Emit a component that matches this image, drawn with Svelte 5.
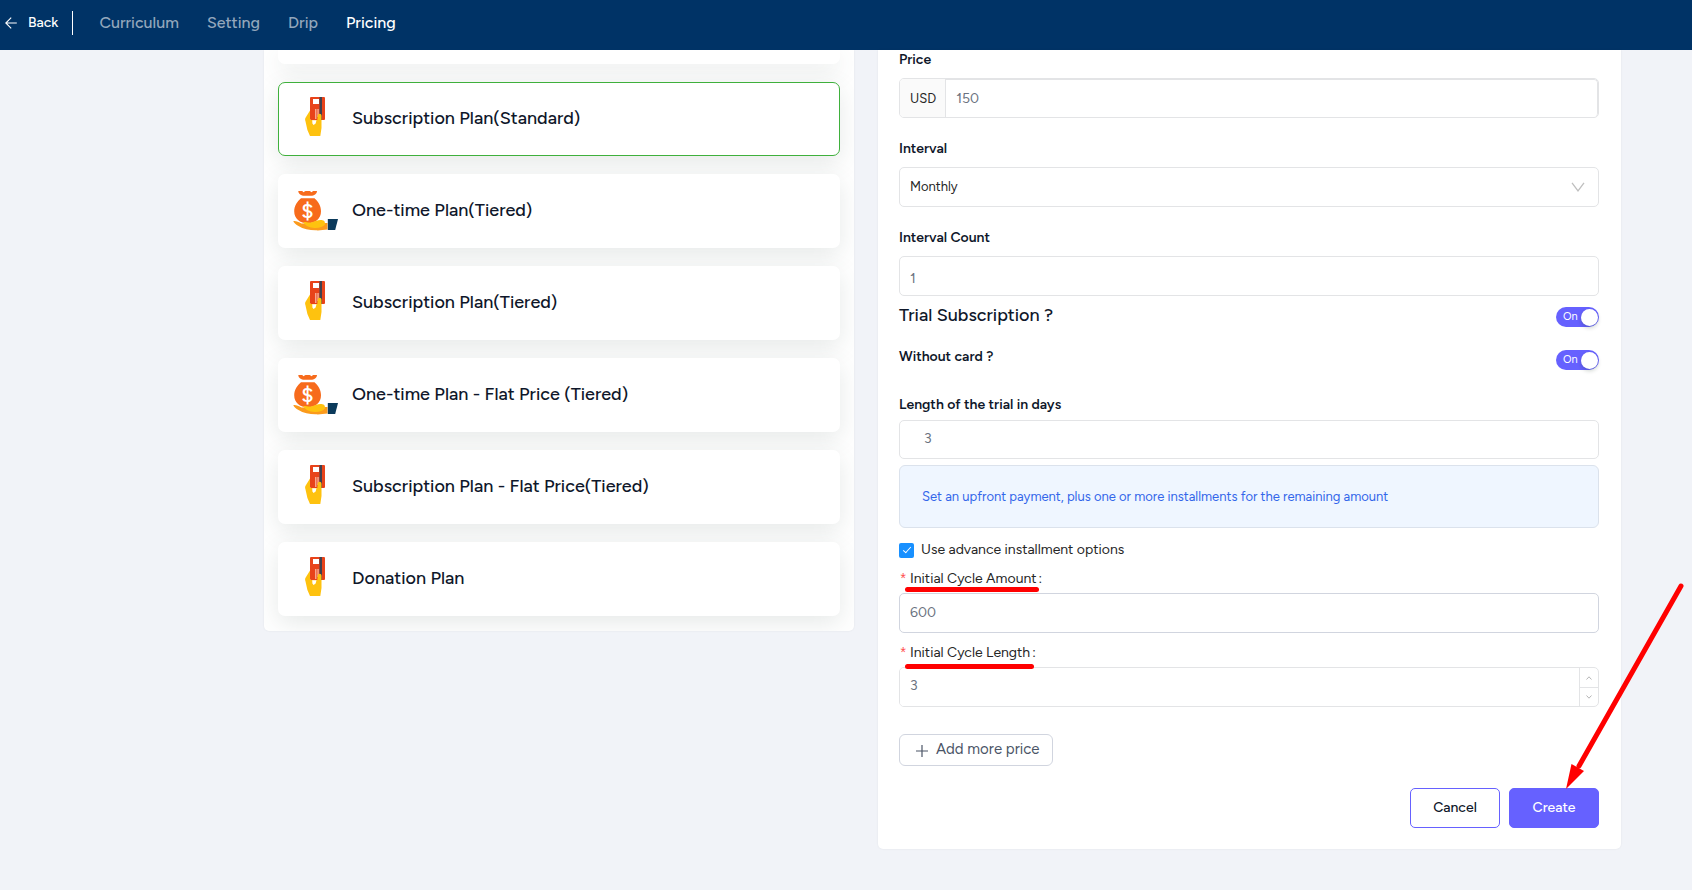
<script>
  const tabs = ['Curriculum', 'Setting', 'Drip', 'Pricing'];
  const activeTab = 'Pricing';

  const plans = [
    { name: 'Subscription Plan(Standard)', icon: 'card' },
    { name: 'One-time Plan(Tiered)', icon: 'bag' },
    { name: 'Subscription Plan(Tiered)', icon: 'card' },
    { name: 'One-time Plan - Flat Price (Tiered)', icon: 'bag' },
    { name: 'Subscription Plan - Flat Price(Tiered)', icon: 'card' },
    { name: 'Donation Plan', icon: 'card' }
  ];

  let selected = $state(0);
  let price = $state('150');
  let interval = $state('Monthly');
  let intervalCount = $state('1');
  let trial = $state(true);
  let withoutCard = $state(true);
  let trialDays = $state('3');
  let advanced = $state(true);
  let cycleAmount = $state('600');
  let cycleLength = $state(3);
</script>

<header class="topbar">
  <a class="back" href="#back">
    <svg width="12" height="12" viewBox="0 0 12 12" fill="none" stroke="currentColor" stroke-width="1.1">
      <path d="M11.8 6H.8M6.2.6.8 6l5.4 5.4" />
    </svg>
    Back
  </a>
  <nav>
    {#each tabs as tab}
      <a href={'#' + tab.toLowerCase()} class:active={tab === activeTab}>{tab}</a>
    {/each}
  </nav>
</header>

<main>
  <section class="panel plans">
    <div class="plan cut"></div>
    {#each plans as plan, i}
      <button type="button" class="plan" class:selected={selected === i} aria-pressed={selected === i} onclick={() => (selected = i)}>
        {#if plan.icon === 'card'}
          <svg width="46" height="44" viewBox="0 0 46 44" aria-hidden="true">
            <rect x="17" y="0" width="15" height="23" rx="1" fill="#e8431a" />
            <rect x="20" y="2" width="6" height="5" fill="#fff" />
            <rect x="26.500" y="0" width="2.500" height="23" fill="#40424f" />
            <path d="M22 12h1.5v10H22zM24.3 12h1.5v8h-1.5z" fill="#f6a78e" />
            <path d="M17 13.5 12.4 21c-.4 1-.4 1.800 0 3l2 9L17 39h10.300l1.200-8V19c0-1.300-.8-2.200-1.800-2.200-1.200 0-1.900.9-2.100 2.200l-.3 4H18.500c-1 0-1.500-.5-1.500-1.500z" fill="#fec20f" />
            <path d="M19.200 23.200h4.300l-.9 3.400-2 1.400-1.200-1.500z" fill="#fff" />
          </svg>
        {:else}
          <svg width="46" height="44" viewBox="0 0 46 44" aria-hidden="true">
            <path d="M5.300 2h4l1 1.200L12.500 2h4.200l2 1.200L20 2h4c0 2.700-3 4.800-6 4.800h-6.500C8.300 6.800 5.300 4.700 5.300 2z" fill="#f76b1c" />
            <path d="M8 9.300h13.500c3.500 3 6.500 7.500 6.500 13 0 7.500-5.500 12-13.300 12S1.200 29.800 1.200 22.300c0-5.500 3.300-10 6.800-13z" fill="#f76b1c" />
            <path d="M.3 32.200c2.500-.4 5.200.8 8.200 2.300L34.500 34v6.500c-4 .2-8 1.300-12 .8-6-.2-12.500-1.300-17-4.300C3 35.500 1 34 .3 32.200z" fill="#fb9a1c" />
            <path d="M10 33c3-.4 5.500 1.200 9 .3 3.500-1.300 6-2.600 9.500-2.300 3 .2 3.500 1.600 3.500 4.500-2 2.400-6 3.700-10.500 3.400-5-.2-8.500-1.500-11.500-5.900z" fill="#fec20f" />
            <path d="M34.800 30H45l-2.800 11h-7.400z" fill="#0b3a5b" />
            <text x="14.500" y="30" text-anchor="middle" font-size="22" fill="#fff">$</text>
          </svg>
        {/if}
        <span>{plan.name}</span>
      </button>
    {/each}
  </section>

  <form class="panel form" onsubmit={(e) => e.preventDefault()}>
    <div class="field">
      <label class="title" for="price">Price</label>
      <div class="addon box">
        <span>USD</span>
        <input id="price" type="text" bind:value={price} />
      </div>
    </div>

    <div class="field">
      <label class="title" for="interval">Interval</label>
      <div class="select">
        <select id="interval" class="box" bind:value={interval}>
          <option>Monthly</option>
          <option>Yearly</option>
        </select>
        <svg width="14" height="10" viewBox="0 0 14 10" fill="none" stroke="#bfbfbf" stroke-width="1.300" aria-hidden="true">
          <path d="M1 .8 7 8.800 13 .8" />
        </svg>
      </div>
    </div>

    <div class="field last">
      <label class="title" for="count">Interval Count</label>
      <input id="count" class="box low" type="text" bind:value={intervalCount} />
    </div>

    <div class="toggle">
      <label class="big" for="trial">Trial Subscription ?</label>
      <span class="switch"><input id="trial" type="checkbox" role="switch" bind:checked={trial} /><span>On</span></span>
    </div>
    <div class="toggle second">
      <label class="title" for="nocard">Without card ?</label>
      <span class="switch"><input id="nocard" type="checkbox" role="switch" bind:checked={withoutCard} /><span>On</span></span>
    </div>

    <label class="title" for="days">Length of the trial in days</label>
    <input id="days" class="box indent" type="text" bind:value={trialDays} />

    <p class="note">Set an upfront payment, plus one or more installments for the remaining amount</p>

    <label class="check">
      <input type="checkbox" bind:checked={advanced} />
      Use advance installment options
    </label>

    <div class="item">
      <label class="required" for="amount"><i>*</i><span>Initial Cycle Amount<b>:</b></span></label>
      <input id="amount" class="box strong" type="text" bind:value={cycleAmount} />
    </div>

    <div class="item">
      <label class="required long" for="length"><i>*</i><span>Initial Cycle Length<b>:</b></span></label>
      <div class="stepper box">
        <input id="length" type="number" bind:value={cycleLength} />
        <div class="steps">
          <button type="button" aria-label="Increase" onclick={() => cycleLength++}>
            <svg width="6" height="4" viewBox="0 0 6 4" fill="none" stroke="#b5b5b5"><path d="M.5 3.500 3 .8l2.500 2.700" /></svg>
          </button>
          <button type="button" aria-label="Decrease" onclick={() => cycleLength--}>
            <svg width="6" height="4" viewBox="0 0 6 4" fill="none" stroke="#b5b5b5"><path d="M.5.5 3 3.200 5.500.5" /></svg>
          </button>
        </div>
      </div>
    </div>

    <button type="button" class="add">
      <svg width="12" height="12" viewBox="0 0 12 12" stroke="currentColor" stroke-width="1.200" aria-hidden="true"><path d="M6 0v12M0 6h12" /></svg>
      <span>Add more price</span>
    </button>

    <div class="actions">
      <button type="button" class="cancel">Cancel</button>
      <div class="target">
        <button type="submit" class="create">Create</button>
        <svg class="arrow" width="120" height="208" viewBox="0 0 120 208" aria-hidden="true">
          <path d="M115 5 13 185" stroke="#f00" stroke-width="5" stroke-linecap="round" />
          <path d="M0 208 5.500 183l12.500 7z" fill="#f00" />
        </svg>
      </div>
    </div>
  </form>
</main>

<style>
  :global(body) {
    margin: 0;
    background: #f1f3f8;
    font-family: Figtree, Lato, 'Open Sans', sans-serif;
    font-size: 14px;
    line-height: 20px;
    color: #0f172a;
  }

  input, select, button {
    font: inherit;
    color: inherit;
    margin: 0;
    box-sizing: border-box;
  }

  button { cursor: pointer; }

  a {
    color: inherit;
    text-decoration: none;
  }

  .topbar {
    display: flex;
    align-items: center;
    height: 50px;
    padding-left: 5px;
    box-sizing: border-box;
    background: #003366;
    color: #fff;
    font-weight: 500;
    padding-bottom: 4px;
  }

  .back {
    display: flex;
    align-items: center;
    gap: 11px;
    height: 24px;
    padding-right: 14px;
    border-right: 1px solid #fff;
  }

  nav {
    display: flex;
    gap: 28px;
    padding-left: 26px;
    font-size: 16px;
    color: #93a7bc;
  }

  nav .active { color: #fff; }

  main {
    display: grid;
    grid-template-columns: 590fr 743fr;
    align-items: start;
    gap: 24px;
    padding: 0 71px 41px 264px;
  }

  .panel {
    background: #fff;
    border-radius: 0 0 5px 5px;
    box-shadow: 0 0 2px rgba(15, 23, 42, 0.08);
    clip-path: inset(0 -4px -4px);
    box-sizing: border-box;
  }

  .plans {
    display: flex;
    flex-direction: column;
    gap: 18px;
    padding: 0 14px 15px;
    overflow: hidden;
  }

  .plan {
    display: flex;
    align-items: center;
    gap: 13px;
    height: 74px;
    padding: 0 14px;
    border: 1px solid transparent;
    border-radius: 7px;
    background: #fff;
    background-clip: border-box;
    box-shadow: 0 7px 24px rgba(60, 85, 80, 0.13);
    font-size: 18px;
    font-weight: 500;
    text-align: left;
  }

  .plan span { padding-bottom: 2px; }

  .plan.cut {
    height: 14px;
    box-sizing: border-box;
    border-radius: 0 0 7px 7px;
  }

  .plan.selected { border-color: #3fb03c; }

  .form {
    display: flex;
    flex-direction: column;
    padding: 0 22px 21px 21px;
    clip-path: none;
  }

  .field {
    display: flex;
    flex-direction: column;
    gap: 8px;
    padding-bottom: 21px;
  }

  .field.last { padding-bottom: 7px; }

  .title {
    font-size: 14px;
    font-weight: 600;
  }

  .big {
    font-size: 18px;
    font-weight: 500;
  }

  .box {
    width: 100%;
    height: 40px;
    padding: 0 10px;
    border: 1px solid #e3e4e6;
    border-radius: 5px;
    background: #fff;
    box-sizing: border-box;
    font-size: 14px;
    color: #6b7280;
    outline: none;
  }

  .box.low { padding-top: 5px; }

  .box.strong {
    padding-bottom: 2px;
    border-color: #d1d5df;
  }

  .box.indent {
    height: 39px;
    padding: 0 24px 3px;
    margin-top: 5px;
  }

  .addon {
    display: flex;
    padding: 0;
    overflow: hidden;
  }

  .addon span {
    display: flex;
    align-items: center;
    padding: 2px 9px 0 10px;
    background: #fafafa;
    border-right: 1px solid #e3e4e6;
    font-size: 13px;
    color: #262626;
  }

  .addon input {
    flex: 1;
    min-width: 0;
    padding: 0 10px;
    border: 0;
    border-top: 1px solid #e3e4e6;
    border-right: 1px solid #e3e4e6;
    border-radius: 0 4px 4px 0;
    outline: none;
  }

  .select { display: grid; }

  .select > * { grid-area: 1 / 1; }

  select {
    appearance: none;
  }

  .select select {
    font-size: 13px;
    color: #262626;
  }

  .select svg {
    justify-self: end;
    align-self: center;
    margin-right: 14px;
    pointer-events: none;
  }

  .toggle {
    display: flex;
    justify-content: space-between;
    align-items: flex-start;
    padding-top: 4px;
    height: 39px;
  }

  .toggle .big { margin-top: -2px; }

  .toggle.second {
    height: 48px;
    padding-top: 1px;
  }

  .toggle .switch { margin-top: 3px; }
  .toggle:not(.second) .switch { margin-top: 0; }

  .switch {
    display: grid;
    width: 43px;
    height: 20px;
  }

  .switch > * { grid-area: 1 / 1; }

  .switch input {
    appearance: none;
    display: flex;
    justify-content: flex-end;
    align-items: center;
    width: 43px;
    height: 20px;
    padding: 0 1px;
    border-radius: 10px;
    background: #6661ff;
  }

  .switch input::after {
    content: '';
    width: 17px;
    height: 17px;
    border-radius: 50%;
    background: #fff;
    box-shadow: 0 2px 4px rgba(0, 35, 11, 0.2);
  }

  .switch span {
    padding-left: 7px;
    font-size: 11px;
    line-height: 19px;
    color: #fff;
    pointer-events: none;
  }

  .note {
    margin: 6px 0 0;
    padding: 21px 22px 20px;
    border: 1px solid #dbe2ec;
    border-radius: 6px;
    background: #eff6ff;
    font-size: 13px;
    color: #3366ea;
  }

  .check {
    display: flex;
    align-items: center;
    gap: 7px;
    margin-top: 12px;
    color: #262626;
  }

  .check input {
    appearance: none;
    display: grid;
    place-items: center;
    width: 15px;
    height: 15px;
    border-radius: 2px;
    background: #1890ff;
  }

  .check input::after {
    content: '';
    width: 3px;
    height: 7px;
    border: solid #fff;
    border-width: 0 1px 1px 0;
    transform: translateY(-1px) rotate(42deg);
  }

  .item {
    display: flex;
    flex-direction: column;
    gap: 4px;
    padding-top: 10px;
  }

  .check + .item { padding-top: 9px; }

  .required {
    display: flex;
    position: relative;
    gap: 5px;
    height: 20px;
    color: #262626;
  }

  .required i {
    width: 6px;
    font-family: 'Liberation Mono', monospace;
    font-size: 14px;
    line-height: 22px;
    color: #ff4d4f;
    font-style: normal;
  }

  .required b {
    margin-left: 2px;
    font-weight: 400;
  }

  .required::after {
    content: '';
    position: absolute;
    left: 6px;
    top: 18px;
    z-index: 1;
    width: 134px;
    height: 5px;
    border-radius: 3px;
    background: #f00;
  }

  .required.long::after {
    top: 21px;
    width: 129px;
  }

  .stepper {
    display: flex;
    padding: 0;
    overflow: hidden;
  }

  .stepper input {
    flex: 1;
    min-width: 0;
    padding: 0 10px 2px;
    border: 0;
    outline: none;
    appearance: textfield;
  }

  .stepper input::-webkit-inner-spin-button { appearance: none; }

  .steps {
    display: grid;
    grid-template-rows: 1fr 1fr;
    width: 18px;
    border-left: 1px solid #e3e4e6;
  }

  .steps button {
    display: grid;
    place-items: center;
    padding: 0;
    border: 0;
    background: none;
  }

  .steps button + button { border-top: 1px solid #e3e4e6; }

  .add {
    display: flex;
    align-items: center;
    align-self: flex-start;
    gap: 8px;
    height: 32px;
    margin-top: 27px;
    padding: 0 12px 0 16px;
    border: 1px solid #d1d5df;
    border-radius: 6px;
    background: #fff;
    font-size: 15px;
    color: #4b5567;
  }

  .add svg { margin-top: 2px; }
  .add span { margin-top: -2px; }

  .actions {
    display: flex;
    justify-content: flex-end;
    gap: 9px;
    margin-top: 22px;
  }

  .target { position: relative; }

  .cancel, .create {
    width: 90px;
    height: 40px;
    border: 1px solid #6661ff;
    border-radius: 5px;
    background: #fff;
    font-weight: 500;
  }

  .create {
    background: #6661ff;
    color: #fff;
  }

  .arrow {
    position: absolute;
    left: 57px;
    bottom: 39px;
    pointer-events: none;
  }
</style>
